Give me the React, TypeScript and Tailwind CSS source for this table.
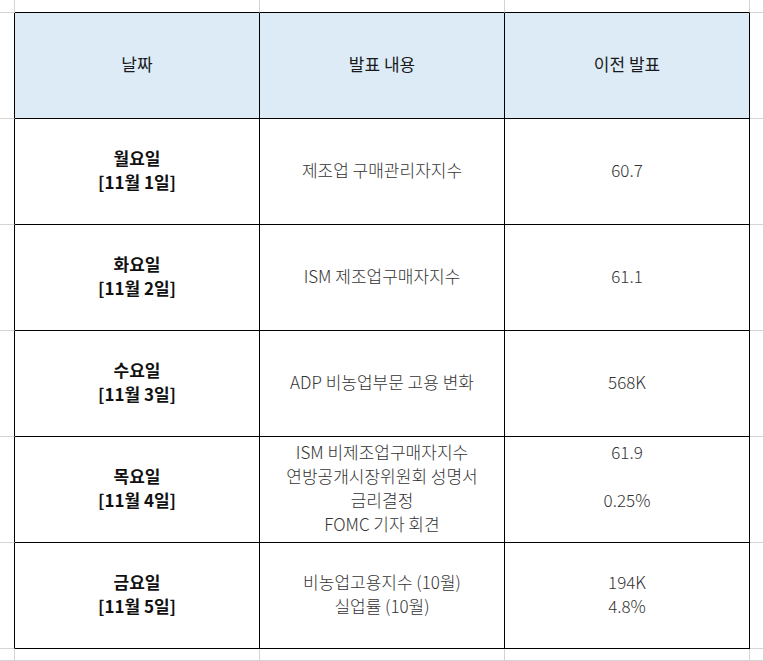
const rows = [
  { day: "월요일", date: "[11월 1일]", items: ["제조업 구매관리자지수"], prev: ["60.7"] },
  { day: "화요일", date: "[11월 2일]", items: ["ISM 제조업구매자지수"], prev: ["61.1"] },
  { day: "수요일", date: "[11월 3일]", items: ["ADP 비농업부문 고용 변화"], prev: ["568K"] },
  {
    day: "목요일",
    date: "[11월 4일]",
    items: ["ISM 비제조업구매자지수", "연방공개시장위원회 성명서", "금리결정", "FOMC 기자 회견"],
    prev: ["61.9", "", "0.25%", ""],
  },
  { day: "금요일", date: "[11월 5일]", items: ["비농업고용지수 (10월)", "실업률 (10월)"], prev: ["194K", "4.8%"] },
];

const font = { fontFamily: '"Noto Sans CJK KR", "Noto Sans", sans-serif' };

function Lines({ lines, className }: { lines: string[]; className: string }) {
  return (
    <div className={className}>
      {lines.map((line, i) => (
        <div key={i} className="h-6 leading-6">
          {line}
        </div>
      ))}
    </div>
  );
}

// spreadsheet cell: right/bottom borders are black where they belong to the table
function Cell({ r, c, children, className = "" }: { r: number; c: number; children?: React.ReactNode; className?: string }) {
  const inTableRow = r >= 1 && r <= 6;
  const inTableCol = c >= 1 && c <= 3;
  const right = inTableRow && c <= 3 ? "border-r-black" : "border-r-[#d4d4d4]";
  const bottom = inTableCol && r <= 6 ? "border-b-black" : "border-b-[#d4d4d4]";
  return (
    <div className={`flex items-center justify-center border-r border-b pb-1 text-center ${right} ${bottom} ${className}`}>
      {children}
    </div>
  );
}

export default function App() {
  const cells: React.ReactNode[] = [];
  for (let r = 0; r < 8; r++) {
    for (let c = 0; c < 5; c++) {
      let content: React.ReactNode = null;
      let cls = "";
      if (r === 1 && c >= 1 && c <= 3) {
        cls = "bg-[#ddebf7] text-[17px] text-[#1a1a1a]";
        content = ["날짜", "발표 내용", "이전 발표"][c - 1];
      } else if (r >= 2 && r <= 6 && c >= 1 && c <= 3) {
        const row = rows[r - 2];
        if (c === 1) content = <Lines lines={[row.day, row.date]} className="text-[17px] font-bold text-[#111]" />;
        if (c === 2) content = <Lines lines={row.items} className="text-[17px] font-light text-[#333]" />;
        if (c === 3) content = <Lines lines={row.prev} className="text-[17px] font-light text-[#333]" />;
      }
      cells.push(
        <Cell key={`${r}-${c}`} r={r} c={c} className={cls}>
          {content}
        </Cell>
      );
    }
  }
  return (
    <div
      className="grid h-screen w-full grid-cols-[15px_repeat(3,245px)_1fr] grid-rows-[13px_repeat(6,106px)_1fr] overflow-hidden bg-white"
      style={font}
    >
      {cells}
    </div>
  );
}
